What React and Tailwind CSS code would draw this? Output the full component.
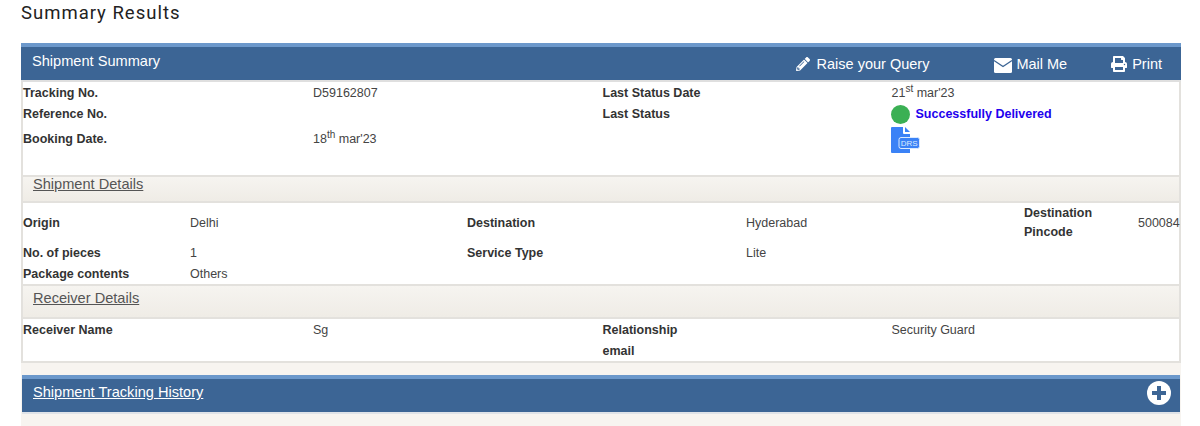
import { FaPencilAlt, FaPrint } from 'react-icons/fa';

function Label({ children, className = '' }) {
    return <div className={`font-bold text-[12.5px] text-[#333] ${className}`}>{children}</div>;
}

function Value({ children, className = '' }) {
    return <div className={`text-[12.5px] text-[#444] ${className}`}>{children}</div>;
}

function Ordinal({ day, suffix, rest }) {
    return (
        <span>
            {day}
            <sup className="text-[10px]">{suffix}</sup> {rest}
        </span>
    );
}

function SectionHead({ title, className = '' }) {
    return (
        <div className={`-mx-[2px] flex border-2 border-[#e3e1dd] bg-gradient-to-b from-[#f6f4f0] to-[#efece6] pl-[10px] ${className}`}>
            <a className="text-[14.6px] leading-[14px] text-[#555] underline">{title}</a>
        </div>
    );
}

function MailIcon() {
    return (
        <svg width="18" height="15" viewBox="0 0 18 15" className="mt-[3px] mr-[4px] ml-[65px]">
            <rect x="0" y="0" width="18" height="15" rx="1.5" fill="white" />
            <path d="M0 2.5L9 8.5L18 2.5" fill="none" stroke="#3c6595" strokeWidth="1.3" />
        </svg>
    );
}

function DocIcon() {
    return (
        <svg width="29" height="27" viewBox="0 0 29 27">
            <path d="M1 0H12V6a1 1 0 0 0 1 1H19V26H1a1 1 0 0 1-1-1V1a1 1 0 0 1 1-1Z" fill="#3b82f6" />
            <path d="M14 0L19 5H14Z" fill="#3b82f6" />
            <rect x="8" y="10.5" width="20.5" height="11" rx="2" fill="#3b82f6" stroke="#dbeafe" strokeWidth="1" />
            <text x="18.2" y="19" textAnchor="middle" fontSize="8" fill="#dbeafe" fontFamily="'Liberation Sans', sans-serif">DRS</text>
        </svg>
    );
}

export default function App() {
    return (
        <div className="h-[426px] w-[1200px] overflow-hidden bg-white font-['Liberation_Sans',Arial,sans-serif]">
            <h1 className="ml-[21px] pt-[2px] font-['Roboto',sans-serif] text-[18.5px] leading-[22px] tracking-[1px] text-[#222]">
                Summary Results
            </h1>

            <div className="mt-[19px] ml-[21px] w-[1160px]">
                {/* Shipment Summary bar */}
                <div className="border-t-4 border-[#6c98cb] bg-[#3c6595]">
                    <div className="flex h-[33px] items-start text-white">
                        <div className="pt-[5px] pl-[11px] text-[14.6px] leading-[18px]">Shipment Summary</div>
                        <div className="ml-auto flex items-center pt-[8px] text-[14.5px] leading-[18px]">
                            <FaPencilAlt size={14} className="mr-[7px]" />
                            <span>Raise your Query</span>
                            <MailIcon />
                            <span>Mail Me</span>
                            <FaPrint size={16} className="mr-[5px] ml-[44px]" />
                            <span className="mr-[19px]">Print</span>
                        </div>
                    </div>
                </div>

                <div className="border-x-2 border-b-2 border-[#e3e1dd] bg-white">
                    <div className="-mx-[2px] h-[2px] bg-[#dfdfdf]" />
                    <div className="grid grid-cols-[290px_289.5px_289px_1fr] grid-rows-[22px_20px_31px_20px] items-center">
                        <Label className="pt-[1px]">Tracking No.</Label>
                        <Value className="pt-[1px]">D59162807</Value>
                        <Label className="pt-[1px]">Last Status Date</Label>
                        <Value className="pt-[1px]"><Ordinal day="21" suffix="st" rest="mar'23" /></Value>

                        <Label>Reference No.</Label>
                        <div />
                        <Label>Last Status</Label>
                        <div className="-ml-[1px] flex items-center">
                            <span className="h-[19px] w-[19px] rounded-full bg-[#3bb054]" />
                            <span className="ml-[6px] text-[12.5px] font-bold text-[#2200ee]">Successfully Delivered</span>
                        </div>

                        <Label>Booking Date.</Label>
                        <Value><Ordinal day="18" suffix="th" rest="mar'23" /></Value>
                        <div />
                        <div className="-ml-[1px] pt-[2px]"><DocIcon /></div>
                    </div>

                    <SectionHead title="Shipment Details" className="h-[28px]" />

                    <div className="grid grid-cols-[167px_277px_279px_278px_114px_1fr] grid-rows-[40px_21px_20px] items-center">
                        <Label>Origin</Label>
                        <Value>Delhi</Value>
                        <Label>Destination</Label>
                        <Value>Hyderabad</Value>
                        <Label className="leading-[19px]">Destination<br />Pincode</Label>
                        <Value>500084</Value>

                        <Label>No. of pieces</Label>
                        <Value>1</Value>
                        <Label>Service Type</Label>
                        <Value>Lite</Value>
                        <div />
                        <div />

                        <Label>Package contents</Label>
                        <Value>Others</Value>
                    </div>

                    <SectionHead title="Receiver Details" className="h-[35px] pt-[5px]" />

                    <div className="grid grid-cols-[290px_289.5px_289px_1fr] grid-rows-[22px_20px] items-center">
                        <Label>Receiver Name</Label>
                        <Value>Sg</Value>
                        <Label>Relationship</Label>
                        <Value>Security Guard</Value>
                        <div />
                        <div />
                        <Label>email</Label>
                    </div>
                </div>

                {/* Tracking history bar */}
                <div className="bg-[#f7f4f0] pt-[12px] pb-[14px]">
                    <div className="mx-[1px] border-t-4 border-b-2 border-t-[#6c98cb] border-b-[#dfe3e8] bg-[#3c6595]">
                        <div className="flex h-[33px] items-center justify-between pr-[9px] pb-[5px] pl-[11px]">
                            <a className="text-[14.6px] text-white underline">Shipment Tracking History</a>
                            <svg width="24" height="24" viewBox="0 0 24 24">
                                <circle cx="12" cy="12" r="12" fill="white" />
                                <path d="M12 5v14M5 12h14" stroke="#3c6595" strokeWidth="4" />
                            </svg>
                        </div>
                    </div>
                </div>
            </div>
        </div>
    );
}
